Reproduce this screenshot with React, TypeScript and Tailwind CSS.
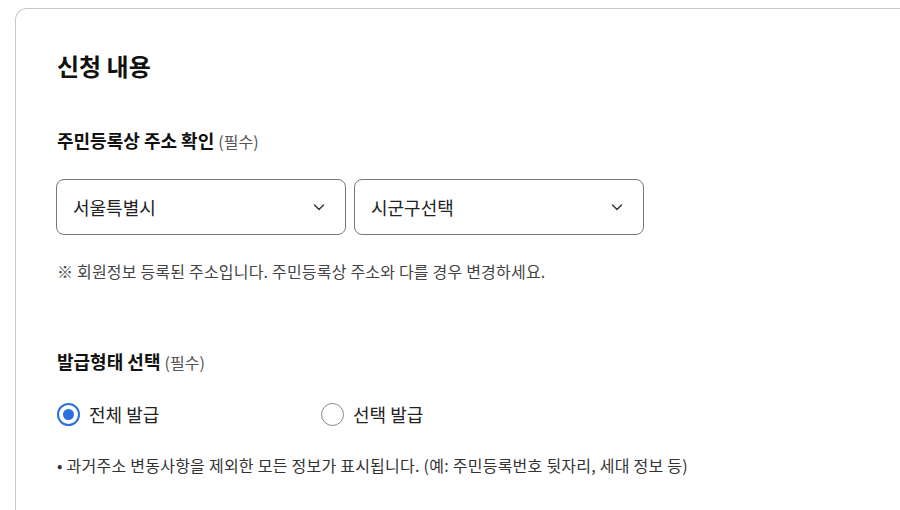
import { useState } from 'react';

function ChevronDown() {
    return (
        <svg width="16" height="16" viewBox="0 0 16 16" fill="none" className="shrink-0">
            <path d="M3.5 6l4.5 4.5L12.5 6" stroke="#333" strokeWidth="1.4" strokeLinecap="round" strokeLinejoin="round" />
        </svg>
    );
}

function SelectBox({ value }: { value: string }) {
    return (
        <button className="flex items-center justify-between w-[290px] h-[56px] pl-[16px] pr-[18px] rounded-[8px] border border-[#777] bg-white text-[18px] text-[#222]">
            <span>{value}</span>
            <ChevronDown />
        </button>
    );
}

function Radio({ checked, label, onClick }: { checked: boolean; label: string; onClick: () => void }) {
    return (
        <label className="flex items-center gap-[9px] cursor-pointer" onClick={onClick}>
            <span
                className={
                    checked
                        ? 'w-[23px] h-[23px] rounded-full border-2 border-[#2b6fe0] flex items-center justify-center bg-white'
                        : 'w-[23px] h-[23px] rounded-full border border-[#888] bg-white'
                }
            >
                {checked && <span className="w-[11px] h-[11px] rounded-full bg-[#2b6fe0]" />}
            </span>
            <span className="text-[18px] text-[#222]">{label}</span>
        </label>
    );
}

export default function App() {
    const [type, setType] = useState<'all' | 'select'>('all');

    return (
        <div className="min-h-screen bg-white pt-[8px] pl-[15px] font-['Noto_Sans_CJK_KR','Noto_Sans',sans-serif]">
            <div className="rounded-tl-[12px] border-t border-l border-[#c8c8c8] pt-[41px] pl-[41px] pb-[40px]">
                {/* Title */}
                <h2 className="text-[24px] font-bold text-[#111] leading-[32px]">신청 내용</h2>

                {/* Address */}
                <div className="mt-[46px]">
                    <h3 className="text-[18px] font-bold text-[#111] leading-[24px]">
                        주민등록상 주소 확인 <span className="text-[16px] font-normal text-[#555]">(필수)</span>
                    </h3>
                    <div className="flex gap-[8px] mt-[26px] -ml-px">
                        <SelectBox value="서울특별시" />
                        <SelectBox value="시군구선택" />
                    </div>
                    <p className="mt-[25px] text-[16px] text-[#444] leading-[22px] tracking-[0.2px]">
                        ※ 회원정보 등록된 주소입니다. 주민등록상 주소와 다를 경우 변경하세요.
                    </p>
                </div>

                {/* Issue type */}
                <div className="mt-[67px]">
                    <h3 className="text-[18px] font-bold text-[#111] leading-[24px]">
                        발급형태 선택 <span className="text-[16px] font-normal text-[#555]">(필수)</span>
                    </h3>
                    <div className="flex mt-[27px]">
                        <div className="w-[264px]">
                            <Radio checked={type === 'all'} label="전체 발급" onClick={() => setType('all')} />
                        </div>
                        <Radio checked={type === 'select'} label="선택 발급" onClick={() => setType('select')} />
                    </div>
                    <p className="mt-[26px] text-[16px] text-[#333] leading-[22px] tracking-[0.25px]">
                        • 과거주소 변동사항을 제외한 모든 정보가 표시됩니다. (예: 주민등록번호 뒷자리, 세대 정보 등)
                    </p>
                </div>
            </div>
        </div>
    );
}
